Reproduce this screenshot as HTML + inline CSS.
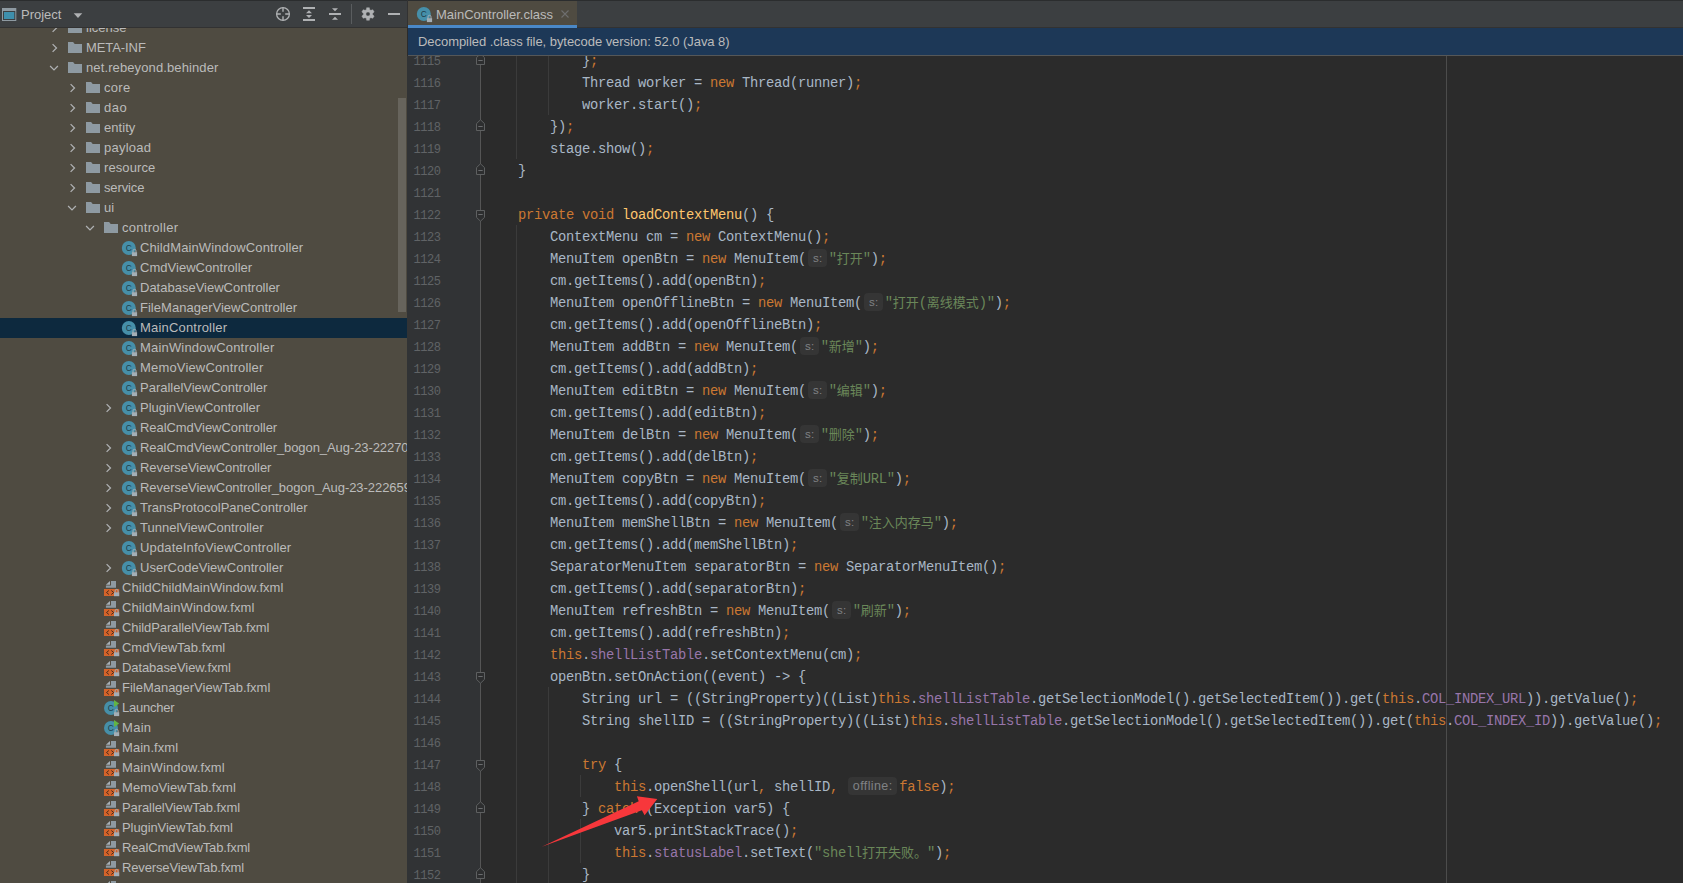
<!DOCTYPE html>
<html lang="zh"><head><meta charset="utf-8"><title>MainController.class</title>
<style>
html,body{margin:0;padding:0}
body{width:1683px;height:883px;overflow:hidden;background:#2B2B2B;position:relative;font-family:"Liberation Sans","Noto Sans CJK SC",sans-serif;font-size:13px;color:#BBBBBB}
#left{position:absolute;left:0;top:0;width:407px;height:883px;background:#4F4B41;overflow:hidden}
#lhead{position:absolute;left:0;top:0;width:408px;height:28px;background:#3C3F41;box-sizing:border-box;border-top:1px solid #2B2D2E;border-bottom:1px solid #323232}
#lhead .ttl{position:absolute;left:21px;top:6px;line-height:16px;font-size:13px;color:#BBBBBB}
#lhead svg{position:absolute}
#tree{position:absolute;left:0;top:28px;width:407px;height:855px;overflow:hidden}
.row{position:absolute;left:0;width:407px;height:20px}
.row.sel{background:#0D293E}
.row span{position:absolute}
.lbl{top:0;line-height:20px;white-space:pre;color:#BBBBBB}
.icw{top:2px;width:17px;height:17px}
.ic,.ar{display:block}
#sb{position:absolute;left:398px;top:70px;width:8px;height:214px;background:rgba(166,166,166,.28)}
#vdiv{position:absolute;left:407px;top:0;width:1px;height:28px;background:#323232}
#tabs{position:absolute;left:408px;top:0;width:1275px;height:28px;background:#3C3F41;box-sizing:border-box;border-top:1px solid #2B2D2E;border-bottom:1px solid #323232}
#tab{position:absolute;left:0;top:0;width:169px;height:27px;background:#4F4B41}
#tab .ul{position:absolute;left:0;bottom:0;width:169px;height:3px;background:#4A88C7}
#tab .tt{position:absolute;left:28px;top:6px;line-height:16px;color:#BBBBBB;white-space:pre}
#tab svg{position:absolute}
#banner{position:absolute;left:408px;top:28px;width:1275px;height:28px;box-sizing:border-box;background:#1D3857;border-bottom:1px solid #555758;color:#BBBBBB}
#banner span{position:absolute;left:10px;top:5px;line-height:17px;white-space:pre;letter-spacing:-0.05px}
#ed{position:absolute;left:408px;top:56px;width:1275px;height:827px;overflow:hidden;background:#2B2B2B}
#gut{position:absolute;left:0;top:0;width:72px;height:827px;background:#313335}
#gline{position:absolute;left:72px;top:0;width:1px;height:827px;background:#555555}
.ln{position:absolute;left:0;width:32.6px;text-align:right;height:22px;line-height:22px;font-family:"Liberation Mono","DejaVu Sans Mono",monospace;font-size:12px;letter-spacing:-0.45px;color:#606366}
.cl{position:absolute;left:78px;height:22px;line-height:22px;white-space:pre;font-family:"Liberation Mono","Noto Sans CJK SC",monospace;font-size:13.8px;letter-spacing:-0.28px;color:#A9B7C6}
.k{color:#CC7832}.f{color:#9876AA}.s{color:#6A8759}.m{color:#FFC66D}
.cj{font-family:"Liberation Mono","Noto Sans CJK SC","WenQuanYi Zen Hei",monospace;font-size:13px;line-height:0;letter-spacing:0}
.hint{display:inline-block;vertical-align:baseline;height:0;line-height:0;position:relative}
.hint i{position:absolute;top:-14px;height:18px;line-height:18px;border-radius:4px;background:#353535;color:#808285;font-style:normal;font-family:"Liberation Sans",sans-serif;font-size:12.5px;letter-spacing:.4px;text-align:center;text-indent:.4px}
.hs{width:22.8px}.hs i{left:2px;width:19px;font-size:11.5px;letter-spacing:.2px}
.ho{width:53.3px}.ho i{left:2px;width:49px}
.fm{position:absolute;left:67px}
.ig{position:absolute;width:1px;background:#3B3B3B}
#rm{position:absolute;left:1038px;top:0;width:1px;height:827px;background:#4C4C4C}
#arrow{position:absolute;left:0;top:0}
</style></head><body>


<div id="left">
 <div id="tree">
<div class="row" style="top:-10px"><span class="arw" style="left:50px;top:4px"><svg class="ar" width="10" height="12" viewBox="0 0 10 12"><path d="M2.6 2.1L6.5 6L2.6 9.9" fill="none" stroke="#AFB1B3" stroke-width="1.25"/></svg></span><span class="icw" style="left:67px"><svg class="ic" width="16" height="16" viewBox="0 0 16 16"><path d="M1 2.1h5.1l1.6 1.8H15v9.2H1z" fill="#8E9AA2"/></svg></span><span class="lbl" style="left:86px">license</span></div>
<div class="row" style="top:10px"><span class="arw" style="left:50px;top:4px"><svg class="ar" width="10" height="12" viewBox="0 0 10 12"><path d="M2.6 2.1L6.5 6L2.6 9.9" fill="none" stroke="#AFB1B3" stroke-width="1.25"/></svg></span><span class="icw" style="left:67px"><svg class="ic" width="16" height="16" viewBox="0 0 16 16"><path d="M1 2.1h5.1l1.6 1.8H15v9.2H1z" fill="#8E9AA2"/></svg></span><span class="lbl" style="left:86px;letter-spacing:-0.078px">META-INF</span></div>
<div class="row" style="top:30px"><span class="arw" style="left:48px;top:5px"><svg class="ar" width="12" height="10" viewBox="0 0 12 10"><path d="M2.1 3.0L6 6.9L9.9 3.0" fill="none" stroke="#AFB1B3" stroke-width="1.25"/></svg></span><span class="icw" style="left:67px"><svg class="ic" width="16" height="16" viewBox="0 0 16 16"><path d="M1 2.1h5.1l1.6 1.8H15v9.2H1z" fill="#8E9AA2"/></svg></span><span class="lbl" style="left:86px;letter-spacing:0.114px">net.rebeyond.behinder</span></div>
<div class="row" style="top:50px"><span class="arw" style="left:68px;top:4px"><svg class="ar" width="10" height="12" viewBox="0 0 10 12"><path d="M2.6 2.1L6.5 6L2.6 9.9" fill="none" stroke="#AFB1B3" stroke-width="1.25"/></svg></span><span class="icw" style="left:85px"><svg class="ic" width="16" height="16" viewBox="0 0 16 16"><path d="M1 2.1h5.1l1.6 1.8H15v9.2H1z" fill="#8E9AA2"/></svg></span><span class="lbl" style="left:104px;letter-spacing:0.276px">core</span></div>
<div class="row" style="top:70px"><span class="arw" style="left:68px;top:4px"><svg class="ar" width="10" height="12" viewBox="0 0 10 12"><path d="M2.6 2.1L6.5 6L2.6 9.9" fill="none" stroke="#AFB1B3" stroke-width="1.25"/></svg></span><span class="icw" style="left:85px"><svg class="ic" width="16" height="16" viewBox="0 0 16 16"><path d="M1 2.1h5.1l1.6 1.8H15v9.2H1z" fill="#8E9AA2"/></svg></span><span class="lbl" style="left:104px;letter-spacing:0.466px">dao</span></div>
<div class="row" style="top:90px"><span class="arw" style="left:68px;top:4px"><svg class="ar" width="10" height="12" viewBox="0 0 10 12"><path d="M2.6 2.1L6.5 6L2.6 9.9" fill="none" stroke="#AFB1B3" stroke-width="1.25"/></svg></span><span class="icw" style="left:85px"><svg class="ic" width="16" height="16" viewBox="0 0 16 16"><path d="M1 2.1h5.1l1.6 1.8H15v9.2H1z" fill="#8E9AA2"/></svg></span><span class="lbl" style="left:104px;letter-spacing:0.054px">entity</span></div>
<div class="row" style="top:110px"><span class="arw" style="left:68px;top:4px"><svg class="ar" width="10" height="12" viewBox="0 0 10 12"><path d="M2.6 2.1L6.5 6L2.6 9.9" fill="none" stroke="#AFB1B3" stroke-width="1.25"/></svg></span><span class="icw" style="left:85px"><svg class="ic" width="16" height="16" viewBox="0 0 16 16"><path d="M1 2.1h5.1l1.6 1.8H15v9.2H1z" fill="#8E9AA2"/></svg></span><span class="lbl" style="left:104px;letter-spacing:0.222px">payload</span></div>
<div class="row" style="top:130px"><span class="arw" style="left:68px;top:4px"><svg class="ar" width="10" height="12" viewBox="0 0 10 12"><path d="M2.6 2.1L6.5 6L2.6 9.9" fill="none" stroke="#AFB1B3" stroke-width="1.25"/></svg></span><span class="icw" style="left:85px"><svg class="ic" width="16" height="16" viewBox="0 0 16 16"><path d="M1 2.1h5.1l1.6 1.8H15v9.2H1z" fill="#8E9AA2"/></svg></span><span class="lbl" style="left:104px;letter-spacing:0.09px">resource</span></div>
<div class="row" style="top:150px"><span class="arw" style="left:68px;top:4px"><svg class="ar" width="10" height="12" viewBox="0 0 10 12"><path d="M2.6 2.1L6.5 6L2.6 9.9" fill="none" stroke="#AFB1B3" stroke-width="1.25"/></svg></span><span class="icw" style="left:85px"><svg class="ic" width="16" height="16" viewBox="0 0 16 16"><path d="M1 2.1h5.1l1.6 1.8H15v9.2H1z" fill="#8E9AA2"/></svg></span><span class="lbl" style="left:104px;letter-spacing:-0.127px">service</span></div>
<div class="row" style="top:170px"><span class="arw" style="left:66px;top:5px"><svg class="ar" width="12" height="10" viewBox="0 0 12 10"><path d="M2.1 3.0L6 6.9L9.9 3.0" fill="none" stroke="#AFB1B3" stroke-width="1.25"/></svg></span><span class="icw" style="left:85px"><svg class="ic" width="16" height="16" viewBox="0 0 16 16"><path d="M1 2.1h5.1l1.6 1.8H15v9.2H1z" fill="#8E9AA2"/></svg></span><span class="lbl" style="left:104px;letter-spacing:-0.013px">ui</span></div>
<div class="row" style="top:190px"><span class="arw" style="left:84px;top:5px"><svg class="ar" width="12" height="10" viewBox="0 0 12 10"><path d="M2.1 3.0L6 6.9L9.9 3.0" fill="none" stroke="#AFB1B3" stroke-width="1.25"/></svg></span><span class="icw" style="left:103px"><svg class="ic" width="16" height="16" viewBox="0 0 16 16"><path d="M1 2.1h5.1l1.6 1.8H15v9.2H1z" fill="#8E9AA2"/></svg></span><span class="lbl" style="left:122px;letter-spacing:0.283px">controller</span></div>
<div class="row" style="top:210px"><span class="icw" style="left:121px"><svg class="ic" width="17" height="17" viewBox="0 0 17 17"><circle cx="7.8" cy="8" r="7" fill="#468FA9"/><text x="7.7" y="10.9" text-anchor="middle" font-family="Liberation Sans, sans-serif" font-size="8.4" fill="#203B48">C</text><g transform="translate(10.9 8.9)"><path d="M0 3.3h5.2v3.9H0z" fill="#A4AEB6"/><path d="M1.1 3.6V1.9a1.5 1.5 0 0 1 3 0v1.7" fill="none" stroke="#A4AEB6" stroke-width="1"/></g></svg></span><span class="lbl" style="left:140px;letter-spacing:0.116px">ChildMainWindowController</span></div>
<div class="row" style="top:230px"><span class="icw" style="left:121px"><svg class="ic" width="17" height="17" viewBox="0 0 17 17"><circle cx="7.8" cy="8" r="7" fill="#468FA9"/><text x="7.7" y="10.9" text-anchor="middle" font-family="Liberation Sans, sans-serif" font-size="8.4" fill="#203B48">C</text><g transform="translate(10.9 8.9)"><path d="M0 3.3h5.2v3.9H0z" fill="#A4AEB6"/><path d="M1.1 3.6V1.9a1.5 1.5 0 0 1 3 0v1.7" fill="none" stroke="#A4AEB6" stroke-width="1"/></g></svg></span><span class="lbl" style="left:140px;letter-spacing:0.026px">CmdViewController</span></div>
<div class="row" style="top:250px"><span class="icw" style="left:121px"><svg class="ic" width="17" height="17" viewBox="0 0 17 17"><circle cx="7.8" cy="8" r="7" fill="#468FA9"/><text x="7.7" y="10.9" text-anchor="middle" font-family="Liberation Sans, sans-serif" font-size="8.4" fill="#203B48">C</text><g transform="translate(10.9 8.9)"><path d="M0 3.3h5.2v3.9H0z" fill="#A4AEB6"/><path d="M1.1 3.6V1.9a1.5 1.5 0 0 1 3 0v1.7" fill="none" stroke="#A4AEB6" stroke-width="1"/></g></svg></span><span class="lbl" style="left:140px">DatabaseViewController</span></div>
<div class="row" style="top:270px"><span class="icw" style="left:121px"><svg class="ic" width="17" height="17" viewBox="0 0 17 17"><circle cx="7.8" cy="8" r="7" fill="#468FA9"/><text x="7.7" y="10.9" text-anchor="middle" font-family="Liberation Sans, sans-serif" font-size="8.4" fill="#203B48">C</text><g transform="translate(10.9 8.9)"><path d="M0 3.3h5.2v3.9H0z" fill="#A4AEB6"/><path d="M1.1 3.6V1.9a1.5 1.5 0 0 1 3 0v1.7" fill="none" stroke="#A4AEB6" stroke-width="1"/></g></svg></span><span class="lbl" style="left:140px;letter-spacing:0.022px">FileManagerViewController</span></div>
<div class="row sel" style="top:290px"><span class="icw" style="left:121px"><svg class="ic" width="17" height="17" viewBox="0 0 17 17"><circle cx="7.8" cy="8" r="7" fill="#468FA9"/><text x="7.7" y="10.9" text-anchor="middle" font-family="Liberation Sans, sans-serif" font-size="8.4" fill="#203B48">C</text><g transform="translate(10.9 8.9)"><path d="M0 3.3h5.2v3.9H0z" fill="#A4AEB6"/><path d="M1.1 3.6V1.9a1.5 1.5 0 0 1 3 0v1.7" fill="none" stroke="#A4AEB6" stroke-width="1"/></g></svg></span><span class="lbl" style="left:140px;letter-spacing:0.19px">MainController</span></div>
<div class="row" style="top:310px"><span class="icw" style="left:121px"><svg class="ic" width="17" height="17" viewBox="0 0 17 17"><circle cx="7.8" cy="8" r="7" fill="#468FA9"/><text x="7.7" y="10.9" text-anchor="middle" font-family="Liberation Sans, sans-serif" font-size="8.4" fill="#203B48">C</text><g transform="translate(10.9 8.9)"><path d="M0 3.3h5.2v3.9H0z" fill="#A4AEB6"/><path d="M1.1 3.6V1.9a1.5 1.5 0 0 1 3 0v1.7" fill="none" stroke="#A4AEB6" stroke-width="1"/></g></svg></span><span class="lbl" style="left:140px;letter-spacing:0.181px">MainWindowController</span></div>
<div class="row" style="top:330px"><span class="icw" style="left:121px"><svg class="ic" width="17" height="17" viewBox="0 0 17 17"><circle cx="7.8" cy="8" r="7" fill="#468FA9"/><text x="7.7" y="10.9" text-anchor="middle" font-family="Liberation Sans, sans-serif" font-size="8.4" fill="#203B48">C</text><g transform="translate(10.9 8.9)"><path d="M0 3.3h5.2v3.9H0z" fill="#A4AEB6"/><path d="M1.1 3.6V1.9a1.5 1.5 0 0 1 3 0v1.7" fill="none" stroke="#A4AEB6" stroke-width="1"/></g></svg></span><span class="lbl" style="left:140px;letter-spacing:0.165px">MemoViewController</span></div>
<div class="row" style="top:350px"><span class="icw" style="left:121px"><svg class="ic" width="17" height="17" viewBox="0 0 17 17"><circle cx="7.8" cy="8" r="7" fill="#468FA9"/><text x="7.7" y="10.9" text-anchor="middle" font-family="Liberation Sans, sans-serif" font-size="8.4" fill="#203B48">C</text><g transform="translate(10.9 8.9)"><path d="M0 3.3h5.2v3.9H0z" fill="#A4AEB6"/><path d="M1.1 3.6V1.9a1.5 1.5 0 0 1 3 0v1.7" fill="none" stroke="#A4AEB6" stroke-width="1"/></g></svg></span><span class="lbl" style="left:140px;letter-spacing:-0.012px">ParallelViewController</span></div>
<div class="row" style="top:370px"><span class="arw" style="left:104px;top:4px"><svg class="ar" width="10" height="12" viewBox="0 0 10 12"><path d="M2.6 2.1L6.5 6L2.6 9.9" fill="none" stroke="#AFB1B3" stroke-width="1.25"/></svg></span><span class="icw" style="left:121px"><svg class="ic" width="17" height="17" viewBox="0 0 17 17"><circle cx="7.8" cy="8" r="7" fill="#468FA9"/><text x="7.7" y="10.9" text-anchor="middle" font-family="Liberation Sans, sans-serif" font-size="8.4" fill="#203B48">C</text><g transform="translate(10.9 8.9)"><path d="M0 3.3h5.2v3.9H0z" fill="#A4AEB6"/><path d="M1.1 3.6V1.9a1.5 1.5 0 0 1 3 0v1.7" fill="none" stroke="#A4AEB6" stroke-width="1"/></g></svg></span><span class="lbl" style="left:140px;letter-spacing:-0.017px">PluginViewController</span></div>
<div class="row" style="top:390px"><span class="icw" style="left:121px"><svg class="ic" width="17" height="17" viewBox="0 0 17 17"><circle cx="7.8" cy="8" r="7" fill="#468FA9"/><text x="7.7" y="10.9" text-anchor="middle" font-family="Liberation Sans, sans-serif" font-size="8.4" fill="#203B48">C</text><g transform="translate(10.9 8.9)"><path d="M0 3.3h5.2v3.9H0z" fill="#A4AEB6"/><path d="M1.1 3.6V1.9a1.5 1.5 0 0 1 3 0v1.7" fill="none" stroke="#A4AEB6" stroke-width="1"/></g></svg></span><span class="lbl" style="left:140px;letter-spacing:-0.066px">RealCmdViewController</span></div>
<div class="row" style="top:410px"><span class="arw" style="left:104px;top:4px"><svg class="ar" width="10" height="12" viewBox="0 0 10 12"><path d="M2.6 2.1L6.5 6L2.6 9.9" fill="none" stroke="#AFB1B3" stroke-width="1.25"/></svg></span><span class="icw" style="left:121px"><svg class="ic" width="17" height="17" viewBox="0 0 17 17"><circle cx="7.8" cy="8" r="7" fill="#468FA9"/><text x="7.7" y="10.9" text-anchor="middle" font-family="Liberation Sans, sans-serif" font-size="8.4" fill="#203B48">C</text><g transform="translate(10.9 8.9)"><path d="M0 3.3h5.2v3.9H0z" fill="#A4AEB6"/><path d="M1.1 3.6V1.9a1.5 1.5 0 0 1 3 0v1.7" fill="none" stroke="#A4AEB6" stroke-width="1"/></g></svg></span><span class="lbl" style="left:140px;letter-spacing:-0.075px">RealCmdViewController_bogon_Aug-23-222708</span></div>
<div class="row" style="top:430px"><span class="arw" style="left:104px;top:4px"><svg class="ar" width="10" height="12" viewBox="0 0 10 12"><path d="M2.6 2.1L6.5 6L2.6 9.9" fill="none" stroke="#AFB1B3" stroke-width="1.25"/></svg></span><span class="icw" style="left:121px"><svg class="ic" width="17" height="17" viewBox="0 0 17 17"><circle cx="7.8" cy="8" r="7" fill="#468FA9"/><text x="7.7" y="10.9" text-anchor="middle" font-family="Liberation Sans, sans-serif" font-size="8.4" fill="#203B48">C</text><g transform="translate(10.9 8.9)"><path d="M0 3.3h5.2v3.9H0z" fill="#A4AEB6"/><path d="M1.1 3.6V1.9a1.5 1.5 0 0 1 3 0v1.7" fill="none" stroke="#A4AEB6" stroke-width="1"/></g></svg></span><span class="lbl" style="left:140px;letter-spacing:-0.063px">ReverseViewController</span></div>
<div class="row" style="top:450px"><span class="arw" style="left:104px;top:4px"><svg class="ar" width="10" height="12" viewBox="0 0 10 12"><path d="M2.6 2.1L6.5 6L2.6 9.9" fill="none" stroke="#AFB1B3" stroke-width="1.25"/></svg></span><span class="icw" style="left:121px"><svg class="ic" width="17" height="17" viewBox="0 0 17 17"><circle cx="7.8" cy="8" r="7" fill="#468FA9"/><text x="7.7" y="10.9" text-anchor="middle" font-family="Liberation Sans, sans-serif" font-size="8.4" fill="#203B48">C</text><g transform="translate(10.9 8.9)"><path d="M0 3.3h5.2v3.9H0z" fill="#A4AEB6"/><path d="M1.1 3.6V1.9a1.5 1.5 0 0 1 3 0v1.7" fill="none" stroke="#A4AEB6" stroke-width="1"/></g></svg></span><span class="lbl" style="left:140px;letter-spacing:-0.05px">ReverseViewController_bogon_Aug-23-222659</span></div>
<div class="row" style="top:470px"><span class="arw" style="left:104px;top:4px"><svg class="ar" width="10" height="12" viewBox="0 0 10 12"><path d="M2.6 2.1L6.5 6L2.6 9.9" fill="none" stroke="#AFB1B3" stroke-width="1.25"/></svg></span><span class="icw" style="left:121px"><svg class="ic" width="17" height="17" viewBox="0 0 17 17"><circle cx="7.8" cy="8" r="7" fill="#468FA9"/><text x="7.7" y="10.9" text-anchor="middle" font-family="Liberation Sans, sans-serif" font-size="8.4" fill="#203B48">C</text><g transform="translate(10.9 8.9)"><path d="M0 3.3h5.2v3.9H0z" fill="#A4AEB6"/><path d="M1.1 3.6V1.9a1.5 1.5 0 0 1 3 0v1.7" fill="none" stroke="#A4AEB6" stroke-width="1"/></g></svg></span><span class="lbl" style="left:140px;letter-spacing:0.016px">TransProtocolPaneController</span></div>
<div class="row" style="top:490px"><span class="arw" style="left:104px;top:4px"><svg class="ar" width="10" height="12" viewBox="0 0 10 12"><path d="M2.6 2.1L6.5 6L2.6 9.9" fill="none" stroke="#AFB1B3" stroke-width="1.25"/></svg></span><span class="icw" style="left:121px"><svg class="ic" width="17" height="17" viewBox="0 0 17 17"><circle cx="7.8" cy="8" r="7" fill="#468FA9"/><text x="7.7" y="10.9" text-anchor="middle" font-family="Liberation Sans, sans-serif" font-size="8.4" fill="#203B48">C</text><g transform="translate(10.9 8.9)"><path d="M0 3.3h5.2v3.9H0z" fill="#A4AEB6"/><path d="M1.1 3.6V1.9a1.5 1.5 0 0 1 3 0v1.7" fill="none" stroke="#A4AEB6" stroke-width="1"/></g></svg></span><span class="lbl" style="left:140px">TunnelViewController</span></div>
<div class="row" style="top:510px"><span class="icw" style="left:121px"><svg class="ic" width="17" height="17" viewBox="0 0 17 17"><circle cx="7.8" cy="8" r="7" fill="#468FA9"/><text x="7.7" y="10.9" text-anchor="middle" font-family="Liberation Sans, sans-serif" font-size="8.4" fill="#203B48">C</text><g transform="translate(10.9 8.9)"><path d="M0 3.3h5.2v3.9H0z" fill="#A4AEB6"/><path d="M1.1 3.6V1.9a1.5 1.5 0 0 1 3 0v1.7" fill="none" stroke="#A4AEB6" stroke-width="1"/></g></svg></span><span class="lbl" style="left:140px;letter-spacing:0.141px">UpdateInfoViewController</span></div>
<div class="row" style="top:530px"><span class="arw" style="left:104px;top:4px"><svg class="ar" width="10" height="12" viewBox="0 0 10 12"><path d="M2.6 2.1L6.5 6L2.6 9.9" fill="none" stroke="#AFB1B3" stroke-width="1.25"/></svg></span><span class="icw" style="left:121px"><svg class="ic" width="17" height="17" viewBox="0 0 17 17"><circle cx="7.8" cy="8" r="7" fill="#468FA9"/><text x="7.7" y="10.9" text-anchor="middle" font-family="Liberation Sans, sans-serif" font-size="8.4" fill="#203B48">C</text><g transform="translate(10.9 8.9)"><path d="M0 3.3h5.2v3.9H0z" fill="#A4AEB6"/><path d="M1.1 3.6V1.9a1.5 1.5 0 0 1 3 0v1.7" fill="none" stroke="#A4AEB6" stroke-width="1"/></g></svg></span><span class="lbl" style="left:140px;letter-spacing:0.026px">UserCodeViewController</span></div>
<div class="row" style="top:550px"><span class="icw" style="left:104px"><svg class="ic" width="17" height="17" viewBox="0 0 17 17"><path d="M7 0.9H12V7.8H1.9V5.4H7z" fill="#8E9AA2"/><path d="M1.9 4.7L6 0.9V4.7z" fill="#A7B1B8"/><rect x="0" y="9" width="15.2" height="7" fill="#D3632A"/><path d="M4.9 10.5L2.5 12.5L4.9 14.5M7.3 10.5L9.7 12.5L7.3 14.5" fill="none" stroke="#46281A" stroke-width=".95"/><g transform="translate(10 9)"><path d="M0 3.3h5.2v3.9H0z" fill="#A4AEB6"/><path d="M1.1 3.6V1.9a1.5 1.5 0 0 1 3 0v1.7" fill="none" stroke="#A4AEB6" stroke-width="1"/></g></svg></span><span class="lbl" style="left:122px;letter-spacing:0.04px">ChildChildMainWindow.fxml</span></div>
<div class="row" style="top:570px"><span class="icw" style="left:104px"><svg class="ic" width="17" height="17" viewBox="0 0 17 17"><path d="M7 0.9H12V7.8H1.9V5.4H7z" fill="#8E9AA2"/><path d="M1.9 4.7L6 0.9V4.7z" fill="#A7B1B8"/><rect x="0" y="9" width="15.2" height="7" fill="#D3632A"/><path d="M4.9 10.5L2.5 12.5L4.9 14.5M7.3 10.5L9.7 12.5L7.3 14.5" fill="none" stroke="#46281A" stroke-width=".95"/><g transform="translate(10 9)"><path d="M0 3.3h5.2v3.9H0z" fill="#A4AEB6"/><path d="M1.1 3.6V1.9a1.5 1.5 0 0 1 3 0v1.7" fill="none" stroke="#A4AEB6" stroke-width="1"/></g></svg></span><span class="lbl" style="left:122px;letter-spacing:0.082px">ChildMainWindow.fxml</span></div>
<div class="row" style="top:590px"><span class="icw" style="left:104px"><svg class="ic" width="17" height="17" viewBox="0 0 17 17"><path d="M7 0.9H12V7.8H1.9V5.4H7z" fill="#8E9AA2"/><path d="M1.9 4.7L6 0.9V4.7z" fill="#A7B1B8"/><rect x="0" y="9" width="15.2" height="7" fill="#D3632A"/><path d="M4.9 10.5L2.5 12.5L4.9 14.5M7.3 10.5L9.7 12.5L7.3 14.5" fill="none" stroke="#46281A" stroke-width=".95"/><g transform="translate(10 9)"><path d="M0 3.3h5.2v3.9H0z" fill="#A4AEB6"/><path d="M1.1 3.6V1.9a1.5 1.5 0 0 1 3 0v1.7" fill="none" stroke="#A4AEB6" stroke-width="1"/></g></svg></span><span class="lbl" style="left:122px;letter-spacing:-0.077px">ChildParallelViewTab.fxml</span></div>
<div class="row" style="top:610px"><span class="icw" style="left:104px"><svg class="ic" width="17" height="17" viewBox="0 0 17 17"><path d="M7 0.9H12V7.8H1.9V5.4H7z" fill="#8E9AA2"/><path d="M1.9 4.7L6 0.9V4.7z" fill="#A7B1B8"/><rect x="0" y="9" width="15.2" height="7" fill="#D3632A"/><path d="M4.9 10.5L2.5 12.5L4.9 14.5M7.3 10.5L9.7 12.5L7.3 14.5" fill="none" stroke="#46281A" stroke-width=".95"/><g transform="translate(10 9)"><path d="M0 3.3h5.2v3.9H0z" fill="#A4AEB6"/><path d="M1.1 3.6V1.9a1.5 1.5 0 0 1 3 0v1.7" fill="none" stroke="#A4AEB6" stroke-width="1"/></g></svg></span><span class="lbl" style="left:122px;letter-spacing:-0.04px">CmdViewTab.fxml</span></div>
<div class="row" style="top:630px"><span class="icw" style="left:104px"><svg class="ic" width="17" height="17" viewBox="0 0 17 17"><path d="M7 0.9H12V7.8H1.9V5.4H7z" fill="#8E9AA2"/><path d="M1.9 4.7L6 0.9V4.7z" fill="#A7B1B8"/><rect x="0" y="9" width="15.2" height="7" fill="#D3632A"/><path d="M4.9 10.5L2.5 12.5L4.9 14.5M7.3 10.5L9.7 12.5L7.3 14.5" fill="none" stroke="#46281A" stroke-width=".95"/><g transform="translate(10 9)"><path d="M0 3.3h5.2v3.9H0z" fill="#A4AEB6"/><path d="M1.1 3.6V1.9a1.5 1.5 0 0 1 3 0v1.7" fill="none" stroke="#A4AEB6" stroke-width="1"/></g></svg></span><span class="lbl" style="left:122px;letter-spacing:-0.084px">DatabaseView.fxml</span></div>
<div class="row" style="top:650px"><span class="icw" style="left:104px"><svg class="ic" width="17" height="17" viewBox="0 0 17 17"><path d="M7 0.9H12V7.8H1.9V5.4H7z" fill="#8E9AA2"/><path d="M1.9 4.7L6 0.9V4.7z" fill="#A7B1B8"/><rect x="0" y="9" width="15.2" height="7" fill="#D3632A"/><path d="M4.9 10.5L2.5 12.5L4.9 14.5M7.3 10.5L9.7 12.5L7.3 14.5" fill="none" stroke="#46281A" stroke-width=".95"/><g transform="translate(10 9)"><path d="M0 3.3h5.2v3.9H0z" fill="#A4AEB6"/><path d="M1.1 3.6V1.9a1.5 1.5 0 0 1 3 0v1.7" fill="none" stroke="#A4AEB6" stroke-width="1"/></g></svg></span><span class="lbl" style="left:122px;letter-spacing:-0.013px">FileManagerViewTab.fxml</span></div>
<div class="row" style="top:670px"><span class="icw" style="left:104px"><svg class="ic" width="17" height="17" viewBox="0 0 17 17"><circle cx="7" cy="8" r="7" fill="#468FA9"/><text x="6.9" y="10.9" text-anchor="middle" font-family="Liberation Sans, sans-serif" font-size="8.4" fill="#203B48">C</text><path d="M10 0v7l5.2-3.5z" fill="#62B543"/><g transform="translate(10 8.9)"><path d="M0 3.3h5.2v3.9H0z" fill="#A4AEB6"/><path d="M1.1 3.6V1.9a1.5 1.5 0 0 1 3 0v1.7" fill="none" stroke="#A4AEB6" stroke-width="1"/></g></svg></span><span class="lbl" style="left:122px;letter-spacing:-0.24px">Launcher</span></div>
<div class="row" style="top:690px"><span class="icw" style="left:104px"><svg class="ic" width="17" height="17" viewBox="0 0 17 17"><circle cx="7" cy="8" r="7" fill="#468FA9"/><text x="6.9" y="10.9" text-anchor="middle" font-family="Liberation Sans, sans-serif" font-size="8.4" fill="#203B48">C</text><path d="M10 0v7l5.2-3.5z" fill="#62B543"/><g transform="translate(10 8.9)"><path d="M0 3.3h5.2v3.9H0z" fill="#A4AEB6"/><path d="M1.1 3.6V1.9a1.5 1.5 0 0 1 3 0v1.7" fill="none" stroke="#A4AEB6" stroke-width="1"/></g></svg></span><span class="lbl" style="left:122px;letter-spacing:0.303px">Main</span></div>
<div class="row" style="top:710px"><span class="icw" style="left:104px"><svg class="ic" width="17" height="17" viewBox="0 0 17 17"><path d="M7 0.9H12V7.8H1.9V5.4H7z" fill="#8E9AA2"/><path d="M1.9 4.7L6 0.9V4.7z" fill="#A7B1B8"/><rect x="0" y="9" width="15.2" height="7" fill="#D3632A"/><path d="M4.9 10.5L2.5 12.5L4.9 14.5M7.3 10.5L9.7 12.5L7.3 14.5" fill="none" stroke="#46281A" stroke-width=".95"/><g transform="translate(10 9)"><path d="M0 3.3h5.2v3.9H0z" fill="#A4AEB6"/><path d="M1.1 3.6V1.9a1.5 1.5 0 0 1 3 0v1.7" fill="none" stroke="#A4AEB6" stroke-width="1"/></g></svg></span><span class="lbl" style="left:122px;letter-spacing:0.053px">Main.fxml</span></div>
<div class="row" style="top:730px"><span class="icw" style="left:104px"><svg class="ic" width="17" height="17" viewBox="0 0 17 17"><path d="M7 0.9H12V7.8H1.9V5.4H7z" fill="#8E9AA2"/><path d="M1.9 4.7L6 0.9V4.7z" fill="#A7B1B8"/><rect x="0" y="9" width="15.2" height="7" fill="#D3632A"/><path d="M4.9 10.5L2.5 12.5L4.9 14.5M7.3 10.5L9.7 12.5L7.3 14.5" fill="none" stroke="#46281A" stroke-width=".95"/><g transform="translate(10 9)"><path d="M0 3.3h5.2v3.9H0z" fill="#A4AEB6"/><path d="M1.1 3.6V1.9a1.5 1.5 0 0 1 3 0v1.7" fill="none" stroke="#A4AEB6" stroke-width="1"/></g></svg></span><span class="lbl" style="left:122px;letter-spacing:0.111px">MainWindow.fxml</span></div>
<div class="row" style="top:750px"><span class="icw" style="left:104px"><svg class="ic" width="17" height="17" viewBox="0 0 17 17"><path d="M7 0.9H12V7.8H1.9V5.4H7z" fill="#8E9AA2"/><path d="M1.9 4.7L6 0.9V4.7z" fill="#A7B1B8"/><rect x="0" y="9" width="15.2" height="7" fill="#D3632A"/><path d="M4.9 10.5L2.5 12.5L4.9 14.5M7.3 10.5L9.7 12.5L7.3 14.5" fill="none" stroke="#46281A" stroke-width=".95"/><g transform="translate(10 9)"><path d="M0 3.3h5.2v3.9H0z" fill="#A4AEB6"/><path d="M1.1 3.6V1.9a1.5 1.5 0 0 1 3 0v1.7" fill="none" stroke="#A4AEB6" stroke-width="1"/></g></svg></span><span class="lbl" style="left:122px;letter-spacing:0.096px">MemoViewTab.fxml</span></div>
<div class="row" style="top:770px"><span class="icw" style="left:104px"><svg class="ic" width="17" height="17" viewBox="0 0 17 17"><path d="M7 0.9H12V7.8H1.9V5.4H7z" fill="#8E9AA2"/><path d="M1.9 4.7L6 0.9V4.7z" fill="#A7B1B8"/><rect x="0" y="9" width="15.2" height="7" fill="#D3632A"/><path d="M4.9 10.5L2.5 12.5L4.9 14.5M7.3 10.5L9.7 12.5L7.3 14.5" fill="none" stroke="#46281A" stroke-width=".95"/><g transform="translate(10 9)"><path d="M0 3.3h5.2v3.9H0z" fill="#A4AEB6"/><path d="M1.1 3.6V1.9a1.5 1.5 0 0 1 3 0v1.7" fill="none" stroke="#A4AEB6" stroke-width="1"/></g></svg></span><span class="lbl" style="left:122px;letter-spacing:-0.085px">ParallelViewTab.fxml</span></div>
<div class="row" style="top:790px"><span class="icw" style="left:104px"><svg class="ic" width="17" height="17" viewBox="0 0 17 17"><path d="M7 0.9H12V7.8H1.9V5.4H7z" fill="#8E9AA2"/><path d="M1.9 4.7L6 0.9V4.7z" fill="#A7B1B8"/><rect x="0" y="9" width="15.2" height="7" fill="#D3632A"/><path d="M4.9 10.5L2.5 12.5L4.9 14.5M7.3 10.5L9.7 12.5L7.3 14.5" fill="none" stroke="#46281A" stroke-width=".95"/><g transform="translate(10 9)"><path d="M0 3.3h5.2v3.9H0z" fill="#A4AEB6"/><path d="M1.1 3.6V1.9a1.5 1.5 0 0 1 3 0v1.7" fill="none" stroke="#A4AEB6" stroke-width="1"/></g></svg></span><span class="lbl" style="left:122px;letter-spacing:-0.088px">PluginViewTab.fxml</span></div>
<div class="row" style="top:810px"><span class="icw" style="left:104px"><svg class="ic" width="17" height="17" viewBox="0 0 17 17"><path d="M7 0.9H12V7.8H1.9V5.4H7z" fill="#8E9AA2"/><path d="M1.9 4.7L6 0.9V4.7z" fill="#A7B1B8"/><rect x="0" y="9" width="15.2" height="7" fill="#D3632A"/><path d="M4.9 10.5L2.5 12.5L4.9 14.5M7.3 10.5L9.7 12.5L7.3 14.5" fill="none" stroke="#46281A" stroke-width=".95"/><g transform="translate(10 9)"><path d="M0 3.3h5.2v3.9H0z" fill="#A4AEB6"/><path d="M1.1 3.6V1.9a1.5 1.5 0 0 1 3 0v1.7" fill="none" stroke="#A4AEB6" stroke-width="1"/></g></svg></span><span class="lbl" style="left:122px;letter-spacing:-0.128px">RealCmdViewTab.fxml</span></div>
<div class="row" style="top:830px"><span class="icw" style="left:104px"><svg class="ic" width="17" height="17" viewBox="0 0 17 17"><path d="M7 0.9H12V7.8H1.9V5.4H7z" fill="#8E9AA2"/><path d="M1.9 4.7L6 0.9V4.7z" fill="#A7B1B8"/><rect x="0" y="9" width="15.2" height="7" fill="#D3632A"/><path d="M4.9 10.5L2.5 12.5L4.9 14.5M7.3 10.5L9.7 12.5L7.3 14.5" fill="none" stroke="#46281A" stroke-width=".95"/><g transform="translate(10 9)"><path d="M0 3.3h5.2v3.9H0z" fill="#A4AEB6"/><path d="M1.1 3.6V1.9a1.5 1.5 0 0 1 3 0v1.7" fill="none" stroke="#A4AEB6" stroke-width="1"/></g></svg></span><span class="lbl" style="left:122px;letter-spacing:-0.146px">ReverseViewTab.fxml</span></div>
<div class="row" style="top:850px"><span class="icw" style="left:104px"><svg class="ic" width="17" height="17" viewBox="0 0 17 17"><path d="M7 0.9H12V7.8H1.9V5.4H7z" fill="#8E9AA2"/><path d="M1.9 4.7L6 0.9V4.7z" fill="#A7B1B8"/><rect x="0" y="9" width="15.2" height="7" fill="#D3632A"/><path d="M4.9 10.5L2.5 12.5L4.9 14.5M7.3 10.5L9.7 12.5L7.3 14.5" fill="none" stroke="#46281A" stroke-width=".95"/><g transform="translate(10 9)"><path d="M0 3.3h5.2v3.9H0z" fill="#A4AEB6"/><path d="M1.1 3.6V1.9a1.5 1.5 0 0 1 3 0v1.7" fill="none" stroke="#A4AEB6" stroke-width="1"/></g></svg></span><span class="lbl" style="left:122px">TransProtocolPane.fxml</span></div>
 <div id="sb"></div>
 </div>
</div>
<div id="lhead">
 <svg style="left:2px;top:7px" width="15" height="14" viewBox="0 0 15 14"><path d="M0 0h14.3v13H0z" fill="#8E9AA2"/><path d="M1 3h12.3v9H1z" fill="#3C3F41"/><path d="M2 4h10.3v7H2z" fill="#3E8FAC"/></svg>
 <span class="ttl">Project</span>
 <svg style="left:73px;top:12px" width="10" height="6" viewBox="0 0 10 6"><path d="M0.7 0.3h8.6L5 5z" fill="#AFB1B3"/></svg>
 <svg style="left:275px;top:5px" width="16" height="16" viewBox="0 0 16 16"><circle cx="8" cy="8" r="6.4" fill="none" stroke="#AFB1B3" stroke-width="1.3"/><path d="M8 1.6v4.2M8 10.2v4.2M1.6 8h4.2M10.2 8h4.2" stroke="#AFB1B3" stroke-width="1.4"/></svg>
 <svg style="left:301px;top:5px" width="16" height="16" viewBox="0 0 16 16"><path d="M2 1h12v2H2zM2 13h12v2H2zM8 4.3l3 2.9H5zM8 11.9l3-2.9H5z" fill="#AFB1B3"/></svg>
 <svg style="left:327px;top:5px" width="16" height="16" viewBox="0 0 16 16"><path d="M2 7h12v2H2zM8 5.2l3-3H5zM8 10.8l3 3H5z" fill="#AFB1B3"/></svg>
 <div style="position:absolute;left:351px;top:3px;width:1px;height:20px;background:#5A5D5F"></div>
 <svg style="left:360px;top:5px" width="16" height="16" viewBox="0 0 16 16"><path fill="#AFB1B3" fill-rule="evenodd" stroke="#AFB1B3" stroke-width=".4" stroke-linejoin="round" d="M9.76 3.64L9.35 1.64L6.65 1.64L6.24 3.64L5.11 4.30L3.17 3.65L1.82 5.99L3.35 7.35L3.35 8.65L1.82 10.01L3.17 12.35L5.11 11.70L6.24 12.36L6.65 14.36L9.35 14.36L9.76 12.36L10.89 11.70L12.83 12.35L14.18 10.01L12.65 8.65L12.65 7.35L14.18 5.99L12.83 3.65L10.89 4.30zM5.90 8a2.1 2.1 0 1 0 4.2 0a2.1 2.1 0 1 0 -4.2 0z"/></svg>
 <div style="position:absolute;left:388px;top:12px;width:12px;height:2px;background:#AFB1B3"></div>
</div>
<div id="vdiv"></div><div style="position:absolute;left:407px;top:56px;width:1px;height:827px;background:#313335"></div>
<div id="tabs">
 <div id="tab">
  <svg style="left:8px;top:5px" width="17" height="17" viewBox="0 0 17 17"><circle cx="7.8" cy="8" r="7" fill="#468FA9"/><text x="7.7" y="10.9" text-anchor="middle" font-family="Liberation Sans, sans-serif" font-size="8.4" fill="#203B48">C</text><g transform="translate(10.9 8.9)"><path d="M0 3.3h5.2v3.9H0z" fill="#A4AEB6"/><path d="M1.1 3.6V1.9a1.5 1.5 0 0 1 3 0v1.7" fill="none" stroke="#A4AEB6" stroke-width="1"/></g></svg>
  <span class="tt">MainController.class</span>
  <svg style="left:152px;top:8px" width="10" height="10" viewBox="0 0 10 10"><path d="M1.5 1.5l7 7M8.500 1.500l-7 7" stroke="#6E6E6E" stroke-width="1.100" fill="none"/></svg>
  <div class="ul"></div>
 </div>
</div>
<div id="banner"><span>Decompiled .class file, bytecode version: 52.0 (Java 8)</span></div>
<div id="ed">
 <div id="gut"></div>
 <div id="gline"></div>
 <div id="rm"></div>
<div class="ig" style="left:108px;top:-7px;height:110px"></div>
<div class="ig" style="left:108px;top:169px;height:682px"></div>
<div class="ig" style="left:140px;top:-7px;height:66px"></div>
<div class="ig" style="left:140px;top:631px;height:220px"></div>
<div class="ig" style="left:172px;top:719px;height:22px"></div>
<div class="ig" style="left:172px;top:763px;height:44px"></div>
<div class="ln" style="top:-5px">1115</div>
<div class="ln" style="top:17px">1116</div>
<div class="ln" style="top:39px">1117</div>
<div class="ln" style="top:61px">1118</div>
<div class="ln" style="top:83px">1119</div>
<div class="ln" style="top:105px">1120</div>
<div class="ln" style="top:127px">1121</div>
<div class="ln" style="top:149px">1122</div>
<div class="ln" style="top:171px">1123</div>
<div class="ln" style="top:193px">1124</div>
<div class="ln" style="top:215px">1125</div>
<div class="ln" style="top:237px">1126</div>
<div class="ln" style="top:259px">1127</div>
<div class="ln" style="top:281px">1128</div>
<div class="ln" style="top:303px">1129</div>
<div class="ln" style="top:325px">1130</div>
<div class="ln" style="top:347px">1131</div>
<div class="ln" style="top:369px">1132</div>
<div class="ln" style="top:391px">1133</div>
<div class="ln" style="top:413px">1134</div>
<div class="ln" style="top:435px">1135</div>
<div class="ln" style="top:457px">1136</div>
<div class="ln" style="top:479px">1137</div>
<div class="ln" style="top:501px">1138</div>
<div class="ln" style="top:523px">1139</div>
<div class="ln" style="top:545px">1140</div>
<div class="ln" style="top:567px">1141</div>
<div class="ln" style="top:589px">1142</div>
<div class="ln" style="top:611px">1143</div>
<div class="ln" style="top:633px">1144</div>
<div class="ln" style="top:655px">1145</div>
<div class="ln" style="top:677px">1146</div>
<div class="ln" style="top:699px">1147</div>
<div class="ln" style="top:721px">1148</div>
<div class="ln" style="top:743px">1149</div>
<div class="ln" style="top:765px">1150</div>
<div class="ln" style="top:787px">1151</div>
<div class="ln" style="top:809px">1152</div>
<div class="ln" style="top:831px">1153</div>
<svg class="fm" style="top:-3px" width="11" height="13" viewBox="0 0 11 13"><path d="M1.5 11.5V4.6L5.5 0.8L9.5 4.6V11.5z" fill="#2D2E2F" stroke="#5E6061" stroke-width="1"/><path d="M3.3 7.5h4.4" stroke="#6A6C6E" stroke-width="1"/></svg>
<svg class="fm" style="top:63px" width="11" height="13" viewBox="0 0 11 13"><path d="M1.5 11.5V4.6L5.5 0.8L9.5 4.6V11.5z" fill="#2D2E2F" stroke="#5E6061" stroke-width="1"/><path d="M3.3 7.5h4.4" stroke="#6A6C6E" stroke-width="1"/></svg>
<svg class="fm" style="top:107px" width="11" height="13" viewBox="0 0 11 13"><path d="M1.5 11.5V4.6L5.5 0.8L9.5 4.6V11.5z" fill="#2D2E2F" stroke="#5E6061" stroke-width="1"/><path d="M3.3 7.5h4.4" stroke="#6A6C6E" stroke-width="1"/></svg>
<svg class="fm" style="top:154px" width="11" height="13" viewBox="0 0 11 13"><path d="M1.5 0.5V7.4L5.5 11.2L9.5 7.4V0.5z" fill="#2D2E2F" stroke="#5E6061" stroke-width="1"/><path d="M3.3 4.5h4.4" stroke="#6A6C6E" stroke-width="1"/></svg>
<svg class="fm" style="top:616px" width="11" height="13" viewBox="0 0 11 13"><path d="M1.5 0.5V7.4L5.5 11.2L9.5 7.4V0.5z" fill="#2D2E2F" stroke="#5E6061" stroke-width="1"/><path d="M3.3 4.5h4.4" stroke="#6A6C6E" stroke-width="1"/></svg>
<svg class="fm" style="top:704px" width="11" height="13" viewBox="0 0 11 13"><path d="M1.5 0.5V7.4L5.5 11.2L9.5 7.4V0.5z" fill="#2D2E2F" stroke="#5E6061" stroke-width="1"/><path d="M3.3 4.5h4.4" stroke="#6A6C6E" stroke-width="1"/></svg>
<svg class="fm" style="top:745px" width="11" height="13" viewBox="0 0 11 13"><path d="M1.5 11.5V4.6L5.5 0.8L9.5 4.6V11.5z" fill="#2D2E2F" stroke="#5E6061" stroke-width="1"/><path d="M3.3 7.5h4.4" stroke="#6A6C6E" stroke-width="1"/></svg>
<svg class="fm" style="top:811px" width="11" height="13" viewBox="0 0 11 13"><path d="M1.5 11.5V4.6L5.5 0.8L9.5 4.6V11.5z" fill="#2D2E2F" stroke="#5E6061" stroke-width="1"/><path d="M3.3 7.5h4.4" stroke="#6A6C6E" stroke-width="1"/></svg>
<div class="cl" style="top:-5.5px">            }<span class="k">;</span></div>
<div class="cl" style="top:16.5px">            Thread worker = <span class="k">new</span> Thread(runner)<span class="k">;</span></div>
<div class="cl" style="top:38.5px">            worker.start()<span class="k">;</span></div>
<div class="cl" style="top:60.5px">        })<span class="k">;</span></div>
<div class="cl" style="top:82.5px">        stage.show()<span class="k">;</span></div>
<div class="cl" style="top:104.5px">    }</div>
<div class="cl" style="top:126.5px"></div>
<div class="cl" style="top:148.5px">    <span class="k">private void</span> <span class="m">loadContextMenu</span>() {</div>
<div class="cl" style="top:170.5px">        ContextMenu cm = <span class="k">new</span> ContextMenu()<span class="k">;</span></div>
<div class="cl" style="top:192.5px">        MenuItem openBtn = <span class="k">new</span> MenuItem(<span class="hint hs"><i>s:</i></span><span class="s">"<span class="cj">打开</span>"</span>)<span class="k">;</span></div>
<div class="cl" style="top:214.5px">        cm.getItems().add(openBtn)<span class="k">;</span></div>
<div class="cl" style="top:236.5px">        MenuItem openOfflineBtn = <span class="k">new</span> MenuItem(<span class="hint hs"><i>s:</i></span><span class="s">"<span class="cj">打开</span>(<span class="cj">离线模式</span>)"</span>)<span class="k">;</span></div>
<div class="cl" style="top:258.5px">        cm.getItems().add(openOfflineBtn)<span class="k">;</span></div>
<div class="cl" style="top:280.5px">        MenuItem addBtn = <span class="k">new</span> MenuItem(<span class="hint hs"><i>s:</i></span><span class="s">"<span class="cj">新增</span>"</span>)<span class="k">;</span></div>
<div class="cl" style="top:302.5px">        cm.getItems().add(addBtn)<span class="k">;</span></div>
<div class="cl" style="top:324.5px">        MenuItem editBtn = <span class="k">new</span> MenuItem(<span class="hint hs"><i>s:</i></span><span class="s">"<span class="cj">编辑</span>"</span>)<span class="k">;</span></div>
<div class="cl" style="top:346.5px">        cm.getItems().add(editBtn)<span class="k">;</span></div>
<div class="cl" style="top:368.5px">        MenuItem delBtn = <span class="k">new</span> MenuItem(<span class="hint hs"><i>s:</i></span><span class="s">"<span class="cj">删除</span>"</span>)<span class="k">;</span></div>
<div class="cl" style="top:390.5px">        cm.getItems().add(delBtn)<span class="k">;</span></div>
<div class="cl" style="top:412.5px">        MenuItem copyBtn = <span class="k">new</span> MenuItem(<span class="hint hs"><i>s:</i></span><span class="s">"<span class="cj">复制</span>URL"</span>)<span class="k">;</span></div>
<div class="cl" style="top:434.5px">        cm.getItems().add(copyBtn)<span class="k">;</span></div>
<div class="cl" style="top:456.5px">        MenuItem memShellBtn = <span class="k">new</span> MenuItem(<span class="hint hs"><i>s:</i></span><span class="s">"<span class="cj">注入内存马</span>"</span>)<span class="k">;</span></div>
<div class="cl" style="top:478.5px">        cm.getItems().add(memShellBtn)<span class="k">;</span></div>
<div class="cl" style="top:500.5px">        SeparatorMenuItem separatorBtn = <span class="k">new</span> SeparatorMenuItem()<span class="k">;</span></div>
<div class="cl" style="top:522.5px">        cm.getItems().add(separatorBtn)<span class="k">;</span></div>
<div class="cl" style="top:544.5px">        MenuItem refreshBtn = <span class="k">new</span> MenuItem(<span class="hint hs"><i>s:</i></span><span class="s">"<span class="cj">刷新</span>"</span>)<span class="k">;</span></div>
<div class="cl" style="top:566.5px">        cm.getItems().add(refreshBtn)<span class="k">;</span></div>
<div class="cl" style="top:588.5px">        <span class="k">this</span>.<span class="f">shellListTable</span>.setContextMenu(cm)<span class="k">;</span></div>
<div class="cl" style="top:610.5px">        openBtn.setOnAction((event) -&gt; {</div>
<div class="cl" style="top:632.5px">            String url = ((StringProperty)((List)<span class="k">this</span>.<span class="f">shellListTable</span>.getSelectionModel().getSelectedItem()).get(<span class="k">this</span>.<span class="f">COL_INDEX_URL</span>)).getValue()<span class="k">;</span></div>
<div class="cl" style="top:654.5px">            String shellID = ((StringProperty)((List)<span class="k">this</span>.<span class="f">shellListTable</span>.getSelectionModel().getSelectedItem()).get(<span class="k">this</span>.<span class="f">COL_INDEX_ID</span>)).getValue()<span class="k">;</span></div>
<div class="cl" style="top:676.5px"></div>
<div class="cl" style="top:698.5px">            <span class="k">try</span> {</div>
<div class="cl" style="top:720.5px">                <span class="k">this</span>.openShell(url<span class="k">,</span> shellID<span class="k">,</span> <span class="hint ho"><i>offline:</i></span><span class="k">false</span>)<span class="k">;</span></div>
<div class="cl" style="top:742.5px">            } <span class="k">catch</span> (Exception var5) {</div>
<div class="cl" style="top:764.5px">                var5.printStackTrace()<span class="k">;</span></div>
<div class="cl" style="top:786.5px">                <span class="k">this</span>.<span class="f">statusLabel</span>.setText(<span class="s">"shell<span class="cj">打开失败。</span>"</span>)<span class="k">;</span></div>
<div class="cl" style="top:808.5px">            }</div>
<div class="cl" style="top:830.5px"></div>
</div>
<svg id="arrow" width="1683" height="883" viewBox="0 0 1683 883"><path d="M541.8 846.8L638.7 801.3L636.900 796.300L657.300 799L644.600 815.300L641.900 810.300z" fill="#F7373B"/></svg>
</body></html>
